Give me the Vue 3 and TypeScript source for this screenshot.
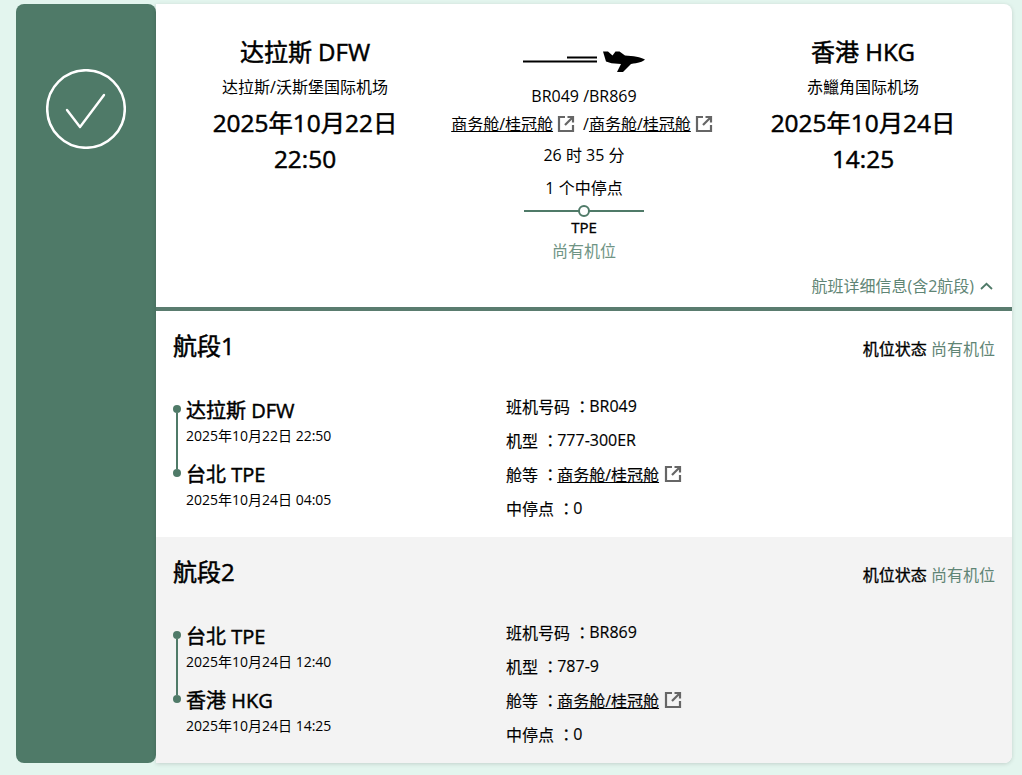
<script setup lang="ts">
interface Segment {
  title: string;
  from: string;
  fromTime: string;
  to: string;
  toTime: string;
  flight: string;
  plane: string;
}

const segments: Segment[] = [
  {
    title: "航段1",
    from: "达拉斯 DFW",
    fromTime: "2025年10月22日 22:50",
    to: "台北 TPE",
    toTime: "2025年10月24日 04:05",
    flight: "BR049",
    plane: "777-300ER",
  },
  {
    title: "航段2",
    from: "台北 TPE",
    fromTime: "2025年10月24日 12:40",
    to: "香港 HKG",
    toTime: "2025年10月24日 14:25",
    flight: "BR869",
    plane: "787-9",
  },
];
</script>

<template>
  <div class="page">
    <aside class="side">
      <svg class="check" width="80" height="80" viewBox="0 0 80 80" fill="none" stroke="#fff">
        <circle cx="40" cy="40" r="38.8" stroke-width="2.5" />
        <path d="M21 41 L34 58 L58 26" stroke-width="2.4" stroke-linecap="round" stroke-linejoin="round" />
      </svg>
    </aside>
    <main class="card">
      <section class="summary">
        <div class="ends">
          <div class="city">达拉斯 DFW</div>
          <div class="airport">达拉斯/沃斯堡国际机场</div>
          <div class="when">2025年10月22日</div>
          <div class="when">22:50</div>
        </div>
        <div class="middle">
          <svg class="plane" width="122" height="24" viewBox="0 0 122 24">
            <path d="M0 12.5H74M44 8.5H74" stroke="#000" stroke-width="2" fill="none" />
            <path d="M80 2.5 L85 2.5 L89.5 6.5 L92.5 2.5 L96.5 2.5 L102 6.5 C110 7 118 8 122 10.5 C120 13 115 14 108 15 L100 23 L94 23 L98 15 L88.5 14.2 L83 12.5 Z" fill="#000" />
          </svg>
          <div class="line flights">BR049 /BR869</div>
          <div class="line cabins">
            <a class="cabin">商务舱/桂冠舱</a>
            <svg class="ext" width="18" height="18" viewBox="0 0 18 18" fill="none" stroke="#666" stroke-width="2.2">
              <path d="M8 2H2V16H16V10M10.5 2H16V7.5M16 2L8 10" />
            </svg>
            <span class="slash">/</span><a class="cabin">商务舱/桂冠舱</a>
            <svg class="ext" width="18" height="18" viewBox="0 0 18 18" fill="none" stroke="#666" stroke-width="2.2">
              <path d="M8 2H2V16H16V10M10.5 2H16V7.5M16 2L8 10" />
            </svg>
          </div>
          <div class="line duration">26 时 35 分</div>
          <div class="line stops">1 个中停点</div>
          <div class="stop-bar"><span class="stop-dot"></span></div>
          <div class="stop-code">TPE</div>
          <div class="avail">尚有机位</div>
        </div>
        <div class="ends">
          <div class="city">香港 HKG</div>
          <div class="airport">赤鱲角国际机场</div>
          <div class="when">2025年10月24日</div>
          <div class="when">14:25</div>
        </div>
        <div class="more">
          航班详细信息(含2航段)
          <svg width="13" height="8" viewBox="0 0 13 8" fill="none" stroke="#4f7a68" stroke-width="1.8">
            <path d="M1 7L6.5 1.8L12 7" />
          </svg>
        </div>
      </section>

      <section v-for="seg in segments" :key="seg.title" class="segment">
        <header class="seg-head">
          <h3>{{ seg.title }}</h3>
          <div class="seat">机位状态 <span>尚有机位</span></div>
        </header>
        <div class="seg-body">
          <div class="route">
            <div class="rail"><i></i><b></b><i></i></div>
            <div class="stops-col">
              <div class="point">
                <div class="place">{{ seg.from }}</div>
                <div class="time">{{ seg.fromTime }}</div>
              </div>
              <div class="point">
                <div class="place">{{ seg.to }}</div>
                <div class="time">{{ seg.toTime }}</div>
              </div>
            </div>
          </div>
          <div class="facts">
            <div><span>班机号码&nbsp;</span><span class="colon">：</span><span>{{ seg.flight }}</span></div>
            <div><span>机型&nbsp;</span><span class="colon">：</span><span>{{ seg.plane }}</span></div>
            <div>
              <span>舱等&nbsp;</span><span class="colon">：</span><a class="cabin">商务舱/桂冠舱</a>
              <svg class="ext" width="18" height="18" viewBox="0 0 18 18" fill="none" stroke="#666" stroke-width="2.2">
                <path d="M8 2H2V16H16V10M10.5 2H16V7.5M16 2L8 10" />
              </svg>
            </div>
            <div><span>中停点&nbsp;</span><span class="colon">：</span><span>0</span></div>
          </div>
        </div>
      </section>
    </main>
  </div>
</template>

<style>
html,
body {
  margin: 0;
  background: #e3f5ee;
}
</style>

<style scoped>
* {
  box-sizing: border-box;
}

.page {
  display: flex;
  width: 1022px;
  height: 775px;
  padding: 4px 10px 12px 16px;
  overflow: hidden;
  font-family: "Open Sans", "Noto Sans CJK SC", sans-serif;
  font-size: 16px;
  color: #000;
  background: #e3f5ee;
}

.side {
  width: 140px;
  flex: none;
  display: flex;
  justify-content: center;
  padding-top: 65px;
  background: #4f7a68;
  border-radius: 8px;
}

.check {
  display: block;
}

.card {
  flex: 1;
  display: flex;
  flex-direction: column;
  background: #fff;
  border-radius: 0 8px 8px 0;
  overflow: hidden;
  box-shadow: 0 1px 4px rgba(0, 0, 0, 0.15);
}

.summary {
  height: 307px;
  flex: none;
  display: grid;
  grid-template-columns: 298px 260px 298px;
  grid-template-rows: 1fr auto;
  border-bottom: 4px solid #5a7c6f;
}

.ends {
  padding-top: 32px;
  text-align: center;
}

.city {
  font-size: 24px;
  line-height: 32px;
  -webkit-text-stroke: 0.5px #000;
}

.airport {
  margin-top: 9px;
  line-height: 20px;
}

.when {
  font-size: 24.4px;
  line-height: 36px;
  -webkit-text-stroke: 0.5px #000;
}

.airport + .when {
  margin-top: 8px;
}

.middle {
  display: flex;
  flex-direction: column;
  align-items: center;
  padding-top: 45px;
}

.plane {
  display: block;
  flex: none;
}

.line {
  line-height: 20px;
}

.flights {
  margin-top: 13px;
}

.cabins {
  margin-top: 8px;
  padding-right: 4px;
  display: flex;
  align-items: center;
  white-space: nowrap;
}

.cabin {
  color: #000;
  text-decoration: underline;
}

.ext {
  display: block;
  margin-left: 4px;
  flex: none;
}

.slash {
  margin-left: 8px;
}

.duration {
  margin-top: 11px;
}

.stops {
  margin-top: 13px;
}

.stop-bar {
  position: relative;
  width: 120px;
  height: 2px;
  margin-top: 12px;
  flex: none;
  background: #4f7a68;
}

.stop-dot {
  position: absolute;
  left: 54px;
  top: -5px;
  width: 12px;
  height: 12px;
  background: #fff;
  border: 2px solid #4f7a68;
  border-radius: 50%;
}

.stop-code {
  margin-top: 6px;
  font-size: 15px;
  line-height: 18px;
  -webkit-text-stroke: 0.35px #000;
}

.avail {
  margin-top: 5px;
  line-height: 20px;
  color: #6f9484;
}

.more {
  grid-column: 1 / 4;
  display: flex;
  justify-content: flex-end;
  align-items: center;
  gap: 6px;
  padding: 0 19px 11px 0;
  line-height: 20px;
  color: #5f8575;
}

.segment {
  height: 226px;
  flex: none;
  padding: 0 17px;
}

.segment:nth-of-type(3) {
  background: #f3f3f3;
}

.seg-head {
  display: flex;
  justify-content: space-between;
  align-items: center;
  height: 70px;
}

.seg-head h3 {
  margin: 0;
  font-size: 24px;
  line-height: 30px;
  font-weight: 400;
  -webkit-text-stroke: 0.5px #000;
}

.seat {
  margin-top: 3px;
  -webkit-text-stroke: 0.3px #000;
}

.seat span {
  -webkit-text-stroke: 0;
  color: #5f8575;
}

.seg-body {
  display: flex;
  padding-top: 13px;
}

.route {
  display: flex;
  width: 333px;
  flex: none;
}

.rail {
  display: flex;
  flex-direction: column;
  align-items: center;
  width: 8px;
  margin-right: 5px;
  padding-top: 11px;
}

.rail i {
  width: 8px;
  height: 8px;
  flex: none;
  border-radius: 50%;
  background: #4f7a68;
}

.rail b {
  width: 2px;
  height: 56px;
  background: #4f7a68;
}

.point {
  height: 64px;
  padding-top: 3px;
}

.place {
  font-size: 20px;
  line-height: 28px;
  -webkit-text-stroke: 0.45px #000;
}

.time {
  margin-top: 1px;
  font-size: 14px;
  line-height: 20px;
}

.facts {
  margin-top: -5px;
  -webkit-text-stroke: 0.15px #000;
}

.facts > div {
  height: 34px;
  display: flex;
  align-items: center;
  white-space: nowrap;
}

.facts .ext {
  margin-left: 5px;
}

.colon {
  margin-right: -1px;
  font-family: "Noto Sans CJK TC", sans-serif;
}
</style>
